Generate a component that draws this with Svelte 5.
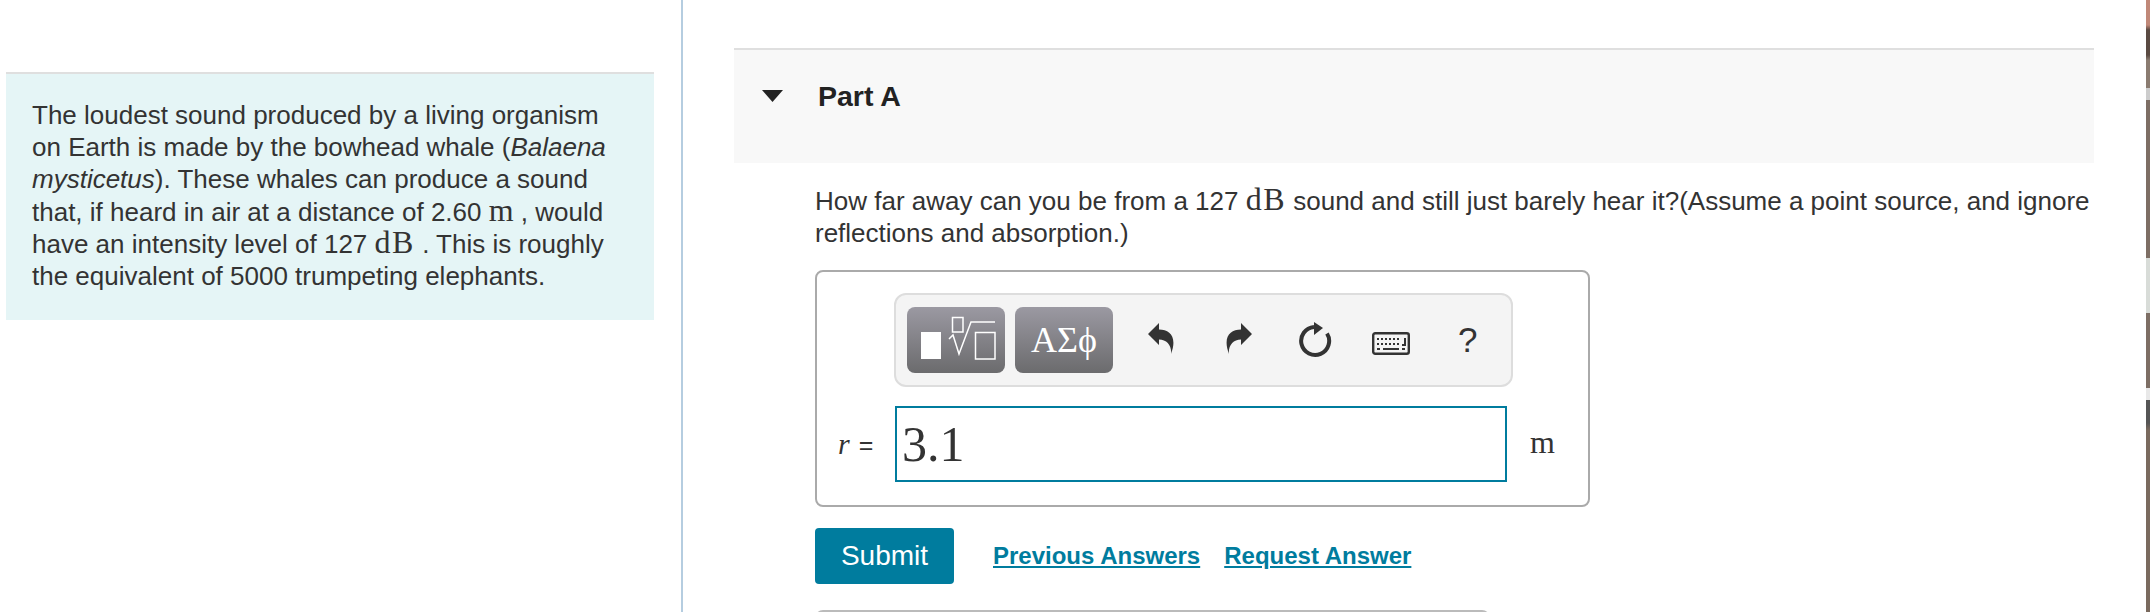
<script>
	let answer = $state('3.1');
</script>

<div class="page">
	<aside class="left">
		<div class="intro">
			The loudest sound produced by a living organism on Earth is made by the bowhead whale (<em>Balaena mysticetus</em>). These whales can produce a sound that, if heard in air at a distance of 2.60 <span class="math">m</span> , would have an intensity level of 127 <span class="math db">dB</span> . This is roughly the equivalent of 5000 trumpeting elephants.
		</div>
	</aside>

	<main class="right">
		<section class="part">
			<header class="part-head">
				<svg class="caret" width="21" height="12" viewBox="0 0 21 12"><path d="M0 0 H21 L10.5 12 Z" fill="#222" /></svg>
				<h2>Part A</h2>
			</header>

			<div class="part-body">
				<p class="question">
					How far away can you be from a 127 <span class="math db">dB</span> sound and still just barely hear it?(Assume a point source, and ignore reflections and absorption.)
				</p>

				<div class="answer-box">
					<div class="toolbar">
						<button class="tpl" aria-label="Templates">
							<svg width="98" height="66" viewBox="0 0 98 66" fill="none" stroke="#fff" stroke-width="1.5">
								<rect x="14" y="25" width="20" height="27" fill="#fff" stroke="none" />
								<rect x="45.5" y="10.5" width="10.5" height="14.5" />
								<path d="M42 32 L46 28 L52 47 L64 15 H88" />
								<rect x="68.5" y="25.5" width="19.5" height="26.5" />
							</svg>
						</button>
						<button class="tpl greek">ΑΣϕ</button>

						<svg class="undo" width="27" height="31" viewBox="0 0 27 31"><path d="M0 11 L11 0 V6.5 C22 6.5 29.5 14 23 31 C24 23 19 16.5 11 16.5 V22 Z" fill="#333" /></svg>
						<svg class="redo" width="27" height="31" viewBox="0 0 27 31"><path d="M27 11 L16 0 V6.5 C5 6.5 -2.5 14 4 31 C3 23 8 16.5 16 16.5 V22 Z" fill="#333" /></svg>
						<svg class="reload" width="34" height="38" viewBox="0 0 34 38">
							<path d="M16 6 A14 14 0 1 0 29 12.5" fill="none" stroke="#333" stroke-width="4" />
							<path d="M16 1 L25 7 L16 14 Z" fill="#333" />
						</svg>
						<svg class="keys" width="38" height="23" viewBox="0 0 38 23">
							<rect x="1.2" y="1.2" width="35.6" height="20.6" rx="2" fill="none" stroke="#333" stroke-width="2.4" />
							<path d="M5 7 H29 M5 12 H29" fill="none" stroke="#333" stroke-width="2" stroke-dasharray="2 2" />
							<path d="M5 17 H8 M11 17 H27 M30 17 H33" fill="none" stroke="#333" stroke-width="2" />
							<path d="M33 6 V13 H30" fill="none" stroke="#333" stroke-width="2" />
						</svg>
						<span class="help">?</span>
					</div>

					<div class="answer-row">
						<span class="label"><i class="rvar">r</i><span class="eq">=</span></span>
						<input class="input" type="text" bind:value={answer} aria-label="r" />
						<span class="math unit">m</span>
					</div>
				</div>

				<div class="actions">
					<button class="submit">Submit</button>
					<a href="#prev" class="link">Previous Answers</a>
					<a href="#req" class="link">Request Answer</a>
				</div>

				<div class="next-box"></div>
			</div>
		</section>
	</main>

	<div class="backdrop"></div>
</div>

<style>
	:global(body) {
		margin: 0;
		background: #fff;
		overflow: hidden;
	}

	.page {
		display: flex;
		height: 612px;
		width: 2150px;
		overflow: hidden;
		font-family: "Liberation Sans", Arial, sans-serif;
		color: #333;
		font-size: 26px;
	}

	.left {
		width: 683px;
		flex-shrink: 0;
		padding: 72px 27px 0 6px;
		box-sizing: border-box;
		border-right: 2px solid #b5cde0;
	}

	.intro {
		background: #e5f5f6;
		border-top: 2px solid #dfdfdf;
		padding: 25px 36px 0 26px;
		line-height: 32.2px;
		height: 248px;
		box-sizing: border-box;
	}

	.right {
		flex: 1;
		padding: 48px 0 0 51px;
		min-width: 0;
	}

	.part {
		width: 1360px;
	}

	.part-head {
		display: flex;
		align-items: flex-start;
		background: #f8f8f8;
		border-top: 2px solid #dfdfdf;
		height: 113px;
	}

	.caret {
		margin: 40px 0 0 28px;
	}

	h2 {
		margin: 29px 0 0 35px;
		font-size: 28.5px;
		font-weight: bold;
		line-height: 34px;
		color: #222;
	}

	.part-body {
		padding: 22px 0 0 81px;
	}

	.question {
		margin: 0;
		line-height: 32px;
	}

	.math {
		font-family: "Liberation Serif", serif;
		font-size: 32px;
		line-height: 0;
	}

	.db {
		letter-spacing: 1.5px;
	}

	.answer-box {
		margin-top: 21px;
		width: 775px;
		height: 237px;
		box-sizing: border-box;
		border: 2px solid #aaa;
		border-radius: 8px;
		padding: 21px 0 0 77px;
	}

	.toolbar {
		display: flex;
		align-items: center;
		width: 619px;
		height: 94px;
		box-sizing: border-box;
		border: 2px solid #ddd;
		border-radius: 12px;
		background: #f4f4f4;
		padding: 0 11px;
	}

	.tpl {
		width: 98px;
		height: 66px;
		border: 0;
		border-radius: 8px;
		background: linear-gradient(#9b99a2, #6b6b6d);
		color: #fff;
		padding: 0;
		font-family: "Liberation Serif", serif;
		font-size: 36px;
		display: flex;
		align-items: center;
		justify-content: center;
	}

	.greek {
		margin-left: 10px;
	}

	.undo {
		margin: 0 0 3px 35px;
	}

	.redo {
		margin: 0 0 3px 50px;
	}

	.reload {
		margin-left: 46px;
	}

	.keys {
		margin: 7px 0 0 40px;
	}

	.help {
		margin-left: 48px;
		font-size: 35px;
		line-height: 40px;
		color: #333;
	}

	.answer-row {
		display: flex;
		align-items: center;
		margin-top: 19px;
		margin-left: -56px;
	}

	.label {
		width: 57px;
		display: flex;
		align-items: baseline;
	}

	.rvar {
		font-family: "Liberation Serif", serif;
		font-size: 30px;
	}

	.eq {
		margin-left: 9px;
		font-size: 25px;
	}

	.input {
		width: 612px;
		height: 76px;
		box-sizing: border-box;
		border: 2px solid #007c9e;
		outline: none;
		padding: 0 5px;
		font-family: "Liberation Serif", serif;
		font-size: 50px;
		color: #333;
	}

	.unit {
		margin: 0 0 4px 23px;
	}

	.actions {
		display: flex;
		align-items: center;
		margin-top: 21px;
	}

	.submit {
		width: 139px;
		height: 56px;
		border: 0;
		border-radius: 4px;
		background: #007c9e;
		color: #fff;
		font-family: inherit;
		font-size: 28px;
		margin-right: 39px;
	}

	.link {
		color: #007c9e;
		font-weight: bold;
		margin-right: 24px;
		font-size: 24px;
	}

	.next-box {
		margin-top: 26px;
		width: 675px;
		height: 40px;
		border-top: 2px solid #bbb;
		border-radius: 8px 8px 0 0;
	}

	/* desktop wallpaper peeking in at the right edge */
	.backdrop {
		position: absolute;
		top: 0;
		left: 2146px;
		width: 4px;
		height: 612px;
		background: linear-gradient(
			#c08878 0 25px,
			#5a4a42 30px 55px,
			#8a7b70 60px 88px,
			#ccc 88px 100px,
			#7d6e64 100px 258px,
			#d8dcd8 258px 313px,
			#7d6e64 313px 388px,
			#e8e8e8 388px 400px,
			#555 400px 423px,
			#7a6a5e 430px
		);
	}
</style>
